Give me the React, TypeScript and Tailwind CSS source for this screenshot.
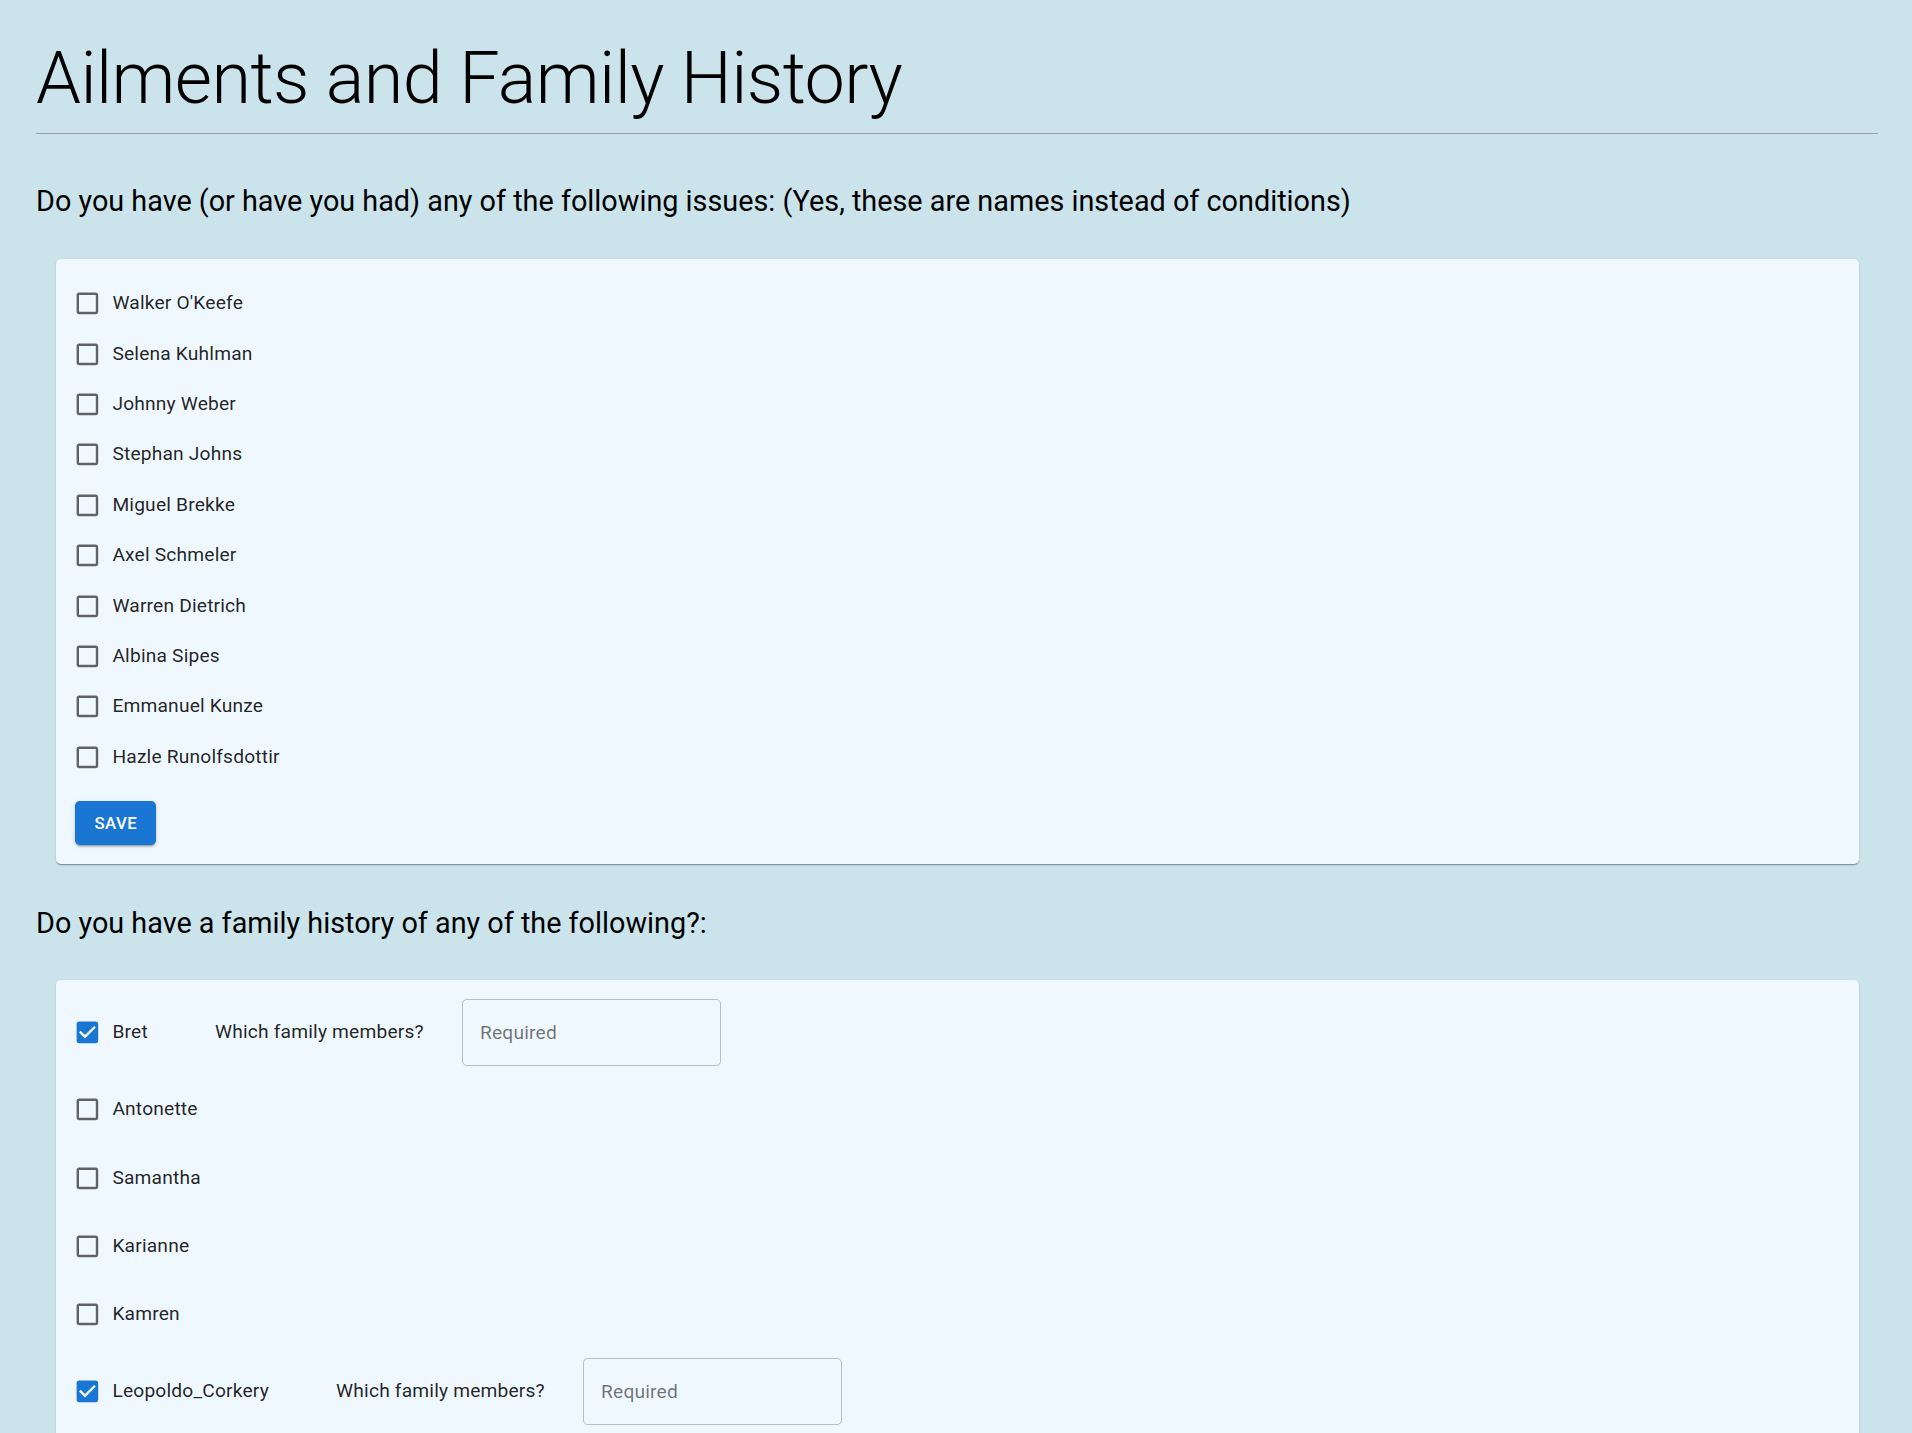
import React, { useState } from 'react';

const ailments = [
  'Walker O\'Keefe',
  'Selena Kuhlman',
  'Johnny Weber',
  'Stephan Johns',
  'Miguel Brekke',
  'Axel Schmeler',
  'Warren Dietrich',
  'Albina Sipes',
  'Emmanuel Kunze',
  'Hazle Runolfsdottir',
];

const familyItems = [
  'Bret',
  'Antonette',
  'Samantha',
  'Karianne',
  'Kamren',
  'Leopoldo_Corkery',
  'Elwyn.Skiles',
  'Maxime_Nienow',
  'Delphine',
  'Moriah.Stanton',
];

// MUI-style checkbox icon, drawn with the material paths
const CheckIcon = ({ checked }: { checked: boolean }) => (
  <svg viewBox="0 0 24 24" className="w-[28.8px] h-[28.8px]">
    {checked ? (
      <path
        fill="#1976d2"
        d="M19 3H5c-1.11 0-2 .9-2 2v14c0 1.1.89 2 2 2h14c1.1 0 2-.9 2-2V5c0-1.1-.9-2-2-2zm-9 14l-5-5 1.41-1.41L10 14.17l7.59-7.59L19 8l-9 9z"
      />
    ) : (
      <path
        fill="rgba(0,0,0,0.6)"
        d="M19 5v14H5V5h14m0-2H5c-1.11 0-2 .9-2 2v14c0 1.1.89 2 2 2h14c1.1 0 2-.9 2-2V5c0-1.1-.9-2-2-2z"
      />
    )}
  </svg>
);

const CheckLabel = ({
  label,
  checked,
  onToggle,
}: {
  label: string;
  checked: boolean;
  onToggle: () => void;
}) => (
  <label className="flex items-center ml-[-13.2px] mr-[19.2px] cursor-pointer select-none">
    <span className="p-[10.8px] flex" onClick={onToggle}>
      <CheckIcon checked={checked} />
    </span>
    <span className="text-[19.2px] leading-[1.5] tracking-[0.00938em] text-[rgba(0,0,0,0.87)]">{label}</span>
  </label>
);

const cardClass =
  'ml-[20px] mr-[19.2px] bg-[#f0f8ff] rounded-[4.8px] p-[19.2px] shadow-[0px_2px_1px_-1px_rgba(0,0,0,0.2),0px_1px_1px_0px_rgba(0,0,0,0.14),0px_1px_3px_0px_rgba(0,0,0,0.12)]';

const buttonClass =
  'mt-[19.2px] h-[43.8px] px-[19.2px] rounded-[4.8px] bg-[#1976d2] text-white text-[16.8px] font-medium tracking-[0.02857em] uppercase shadow-[0px_3px_1px_-2px_rgba(0,0,0,0.2),0px_2px_2px_0px_rgba(0,0,0,0.14),0px_1px_5px_0px_rgba(0,0,0,0.12)]';

export default function App() {
  const [issues, setIssues] = useState<Record<string, boolean>>({});
  const [family, setFamily] = useState<Record<string, boolean>>({
    Bret: true,
    Leopoldo_Corkery: true,
  });

  return (
    <div className="min-h-screen bg-[#cbe4eb] pl-[36px] pr-[34px] pt-[36px] pb-[60px] font-['Roboto',sans-serif] text-[rgba(0,0,0,0.87)]">
      <h1 className="text-[72px] font-light leading-[1.2] tracking-[-0.00833em] text-black">
        Ailments and Family History
      </h1>
      <hr className="mt-[11px] border-0 border-t border-[#9e9e9e]" />

      <h2 className="mt-[48px] text-[28.8px] leading-[38.4px] font-normal text-black">
        Do you have (or have you had) any of the following issues: (Yes, these are names instead of conditions)
      </h2>

      {/* Ailments card */}
      <div className={`${cardClass} mt-[38.4px]`}>
        <div className="flex flex-col">
          {ailments.map((name) => (
            <div key={name} className="flex items-center">
              <CheckLabel
                label={name}
                checked={!!issues[name]}
                onToggle={() => setIssues({ ...issues, [name]: !issues[name] })}
              />
            </div>
          ))}
        </div>
        <button className={buttonClass}>Save</button>
      </div>

      <h2 className="mt-[40px] text-[28.8px] leading-[38.4px] font-normal text-black">
        Do you have a family history of any of the following?:
      </h2>

      {/* Family history card */}
      <div className={`${cardClass} mt-[37.2px]`}>
        <div className="flex flex-col gap-[18px]">
          {familyItems.map((name) => (
            <div key={name} className="flex items-center">
              <CheckLabel
                label={name}
                checked={!!family[name]}
                onToggle={() => setFamily({ ...family, [name]: !family[name] })}
              />
              {family[name] && (
                <>
                  <span className="ml-[48px] text-[19.2px] leading-[1.5] tracking-[0.00938em]">
                    Which family members?
                  </span>
                  <input
                    placeholder="Required"
                    className="ml-[38.4px] w-[259px] h-[67.2px] px-[16.8px] rounded-[4.8px] border border-[rgba(0,0,0,0.23)] bg-transparent text-[19.2px] tracking-[0.00938em] outline-none placeholder:text-[rgba(0,0,0,0.55)]"
                  />
                </>
              )}
            </div>
          ))}
        </div>
        <button className={buttonClass}>Save</button>
      </div>
    </div>
  );
}
